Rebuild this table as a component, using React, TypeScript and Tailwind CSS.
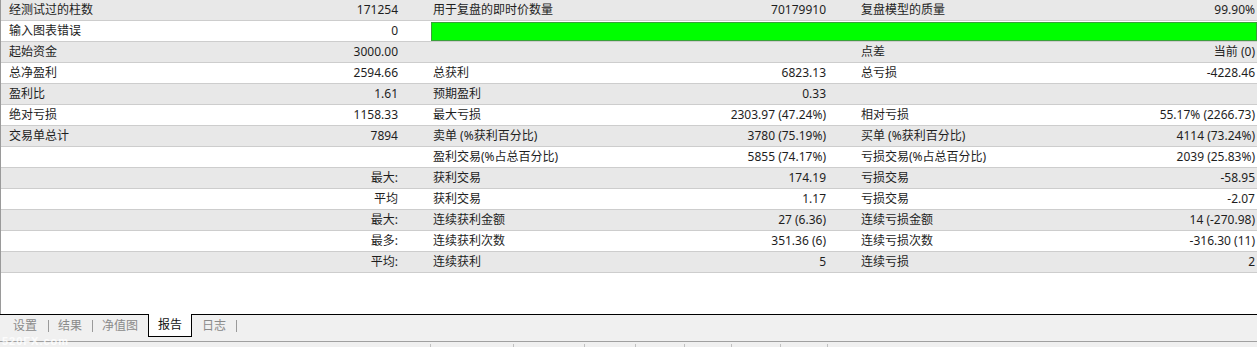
import React from "react";

type Cell = { l?: string; v?: string };

const rows: { c1: Cell; c2?: Cell; c3?: Cell; bar?: boolean }[] = [
  { c1: { l: "经测试过的柱数", v: "171254" }, c2: { l: "用于复盘的即时价数量", v: "70179910" }, c3: { l: "复盘模型的质量", v: "99.90%" } },
  { c1: { l: "输入图表错误", v: "0" }, bar: true },
  { c1: { l: "起始资金", v: "3000.00" }, c2: {}, c3: { l: "点差", v: "当前 (0)" } },
  { c1: { l: "总净盈利", v: "2594.66" }, c2: { l: "总获利", v: "6823.13" }, c3: { l: "总亏损", v: "-4228.46" } },
  { c1: { l: "盈利比", v: "1.61" }, c2: { l: "预期盈利", v: "0.33" }, c3: {} },
  { c1: { l: "绝对亏损", v: "1158.33" }, c2: { l: "最大亏损", v: "2303.97 (47.24%)" }, c3: { l: "相对亏损", v: "55.17% (2266.73)" } },
  { c1: { l: "交易单总计", v: "7894" }, c2: { l: "卖单 (%获利百分比)", v: "3780 (75.19%)" }, c3: { l: "买单 (%获利百分比)", v: "4114 (73.24%)" } },
  { c1: {}, c2: { l: "盈利交易(%占总百分比)", v: "5855 (74.17%)" }, c3: { l: "亏损交易(%占总百分比)", v: "2039 (25.83%)" } },
  { c1: { v: "最大:" }, c2: { l: "获利交易", v: "174.19" }, c3: { l: "亏损交易", v: "-58.95" } },
  { c1: { v: "平均" }, c2: { l: "获利交易", v: "1.17" }, c3: { l: "亏损交易", v: "-2.07" } },
  { c1: { v: "最大:" }, c2: { l: "连续获利金额", v: "27 (6.36)" }, c3: { l: "连续亏损金额", v: "14 (-270.98)" } },
  { c1: { v: "最多:" }, c2: { l: "连续获利次数", v: "351.36 (6)" }, c3: { l: "连续亏损次数", v: "-316.30 (11)" } },
  { c1: { v: "平均:" }, c2: { l: "连续获利", v: "5" }, c3: { l: "连续亏损", v: "2" } },
];

function C({ cell, cls }: { cell?: Cell; cls: string }) {
  return (
    <div className={`flex items-center justify-between whitespace-nowrap ${cls}`}>
      <span>{cell?.l ?? ""}</span>
      <span>{cell?.v ?? ""}</span>
    </div>
  );
}

export default function App() {
  const ticks = [430, 513, 584, 635, 684, 731, 780, 827];
  return (
    <div className="relative w-[1257px] h-[347px] bg-[#f0f0f0] flex flex-col overflow-hidden font-['Noto_Sans','Noto_Sans_CJK_SC',sans-serif] text-[12px] text-[#1e1e1e]">
      <div className="h-[314px] bg-white border-l border-[#9a9a9a] flex flex-col">
        {rows.map((r, i) => (
          <div
            key={i}
            className={`grid grid-cols-[423px_428px_1fr] h-[21px] leading-[20px] border-b border-[#cdcdcd] ${
              i % 2 === 0 ? "bg-[#e8e8e8]" : "bg-white"
            }`}
          >
            <C cell={r.c1} cls="pl-[8px] pr-[26px]" />
            {r.bar ? (
              <div className="col-span-2 pl-[7px] pt-[1px]">
                <div className="h-[19px] bg-[#00ff00] border border-[#3aa03a]" />
              </div>
            ) : (
              <>
                <C cell={r.c2} cls="pl-[9px] pr-[26px]" />
                <C cell={r.c3} cls="pl-[9px] pr-[2px]" />
              </>
            )}
          </div>
        ))}
      </div>
      <div className="h-[27px] border-t border-black flex items-start text-[12px] text-[#8a8a8a]">
        <div className="flex items-center h-[20px] mt-[1px] pl-[13px]">
          <span>设置</span>
          <span className="w-px h-[12px] bg-[#9a9a9a] ml-[11px] mr-[9px]" />
          <span>结果</span>
          <span className="w-px h-[12px] bg-[#9a9a9a] ml-[10px] mr-[9px]" />
          <span>净值图</span>
        </div>
        <div className="-mt-px ml-[10px] w-[44px] h-[23px] bg-white border-l border-r border-b border-black flex items-center justify-center text-[#111]">
          报告
        </div>
        <div className="flex items-center h-[20px] mt-[1px] pl-[10px]">
          <span>日志</span>
          <span className="w-px h-[12px] bg-[#9a9a9a] ml-[10px]" />
        </div>
      </div>
      <div className="h-px bg-[#a0a0a0]" />
      <div className="flex-1 flex items-end">
        {ticks.map((x, i) => (
          <div
            key={i}
            className="w-px h-[3px] bg-[#c0c0c0]"
            style={{ marginLeft: i === 0 ? x : x - ticks[i - 1] - 1 }}
          />
        ))}
      </div>
      <div className="absolute left-[2px] bottom-0 leading-[11px] text-[11px] font-bold text-white/80 font-['Liberation_Sans',sans-serif] tracking-[1px]">
        520FX.com
      </div>
    </div>
  );
}
